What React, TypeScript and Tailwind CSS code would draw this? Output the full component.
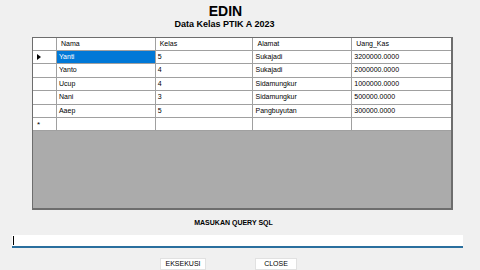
import React from "react";

const rows = [
  ["Yanti", "5", "Sukajadi", "3200000.0000"],
  ["Yanto", "4", "Sukajadi", "2000000.0000"],
  ["Ucup", "4", "Sidamungkur", "1000000.0000"],
  ["Nani", "3", "Sidamungkur", "500000.0000"],
  ["Aaep", "5", "Pangbuyutan", "300000.0000"],
];

const cols = ["Nama", "Kelas", "Alamat", "Uang_Kas"];
const widths = ["w-[99px]", "w-[98px]", "w-[99px]", "w-[99px]"];

export default function App() {
  return (
    <div
      className="w-[480px] h-[270px] overflow-hidden bg-[#f0f0f0] flex flex-col text-black"
      style={{ fontFamily: '"Liberation Sans", Arial, sans-serif' }}
    >
      <div className="mt-[4px] w-[451px] text-center text-[14px] leading-[14px] font-bold">EDIN</div>
      <div className="mt-[2px] w-[449px] text-center text-[9px] leading-[9px] font-bold">Data Kelas PTIK A 2023</div>

      <div className="mt-[8px] ml-[32px] w-[421px] h-[176px] border border-[#6d6d6d] border-r-2 border-b-2 flex flex-col bg-[#ababab]">
        {/* header */}
        <div className="flex h-[13px] bg-white border-b border-[#a0a0a0] text-[7px] leading-[12px]">
          <div className="w-[24px] border-r border-[#a0a0a0]" />
          {cols.map((c, i) => (
            <div key={c} className={`${widths[i]} pl-[4px] ${i < 3 ? "border-r border-[#a0a0a0]" : ""}`}>
              {c}
            </div>
          ))}
        </div>
        {rows.map((r, ri) => (
          <div key={ri} className="flex h-[13.4px] bg-white border-b border-[#a0a0a0] text-[7px] leading-[12px]">
            <div className="w-[24px] border-r border-[#a0a0a0] flex items-center pl-[4px]">
              {ri === 0 ? (
                <svg width="4" height="6" viewBox="0 0 4 6">
                  <path d="M0 0 L4 3 L0 6 Z" fill="#000" />
                </svg>
              ) : null}
            </div>
            {r.map((v, ci) => (
              <div
                key={ci}
                className={`${widths[ci]} pl-[2px] ${ci < 3 ? "border-r border-[#a0a0a0]" : ""} ${
                  ri === 0 && ci === 0 ? "bg-[#0078d7] text-white" : ""
                }`}
              >
                {v}
              </div>
            ))}
          </div>
        ))}
        <div className="flex h-[13.4px] bg-white border-b border-[#a0a0a0] text-[7px] leading-[12px]">
          <div className="w-[24px] border-r border-[#a0a0a0] pl-[4px] text-[8px] leading-[13px]">*</div>
          {widths.map((w, ci) => (
            <div key={ci} className={`${w} ${ci < 3 ? "border-r border-[#a0a0a0]" : ""}`} />
          ))}
        </div>
        <div className="flex-1" />
      </div>

      <div className="mt-[8px] w-[467px] text-center text-[7px] leading-[9px] font-bold">MASUKAN QUERY SQL</div>

      <div className="mt-[8px] ml-[12px] w-[451px] h-[13px] bg-white border-b-2 border-[#2a6f9e] flex items-center pl-[1px]">
        <div className="w-[1px] h-[9px] bg-black" />
      </div>

      <div className="mt-[10px] ml-[160px] flex gap-[49px] text-[7px] leading-[10px]">
        <div className="w-[46px] h-[12px] bg-white border border-[#e1e1e1] text-center">EKSEKUSI</div>
        <div className="w-[42px] h-[12px] bg-white border border-[#e1e1e1] text-center">CLOSE</div>
      </div>
    </div>
  );
}
